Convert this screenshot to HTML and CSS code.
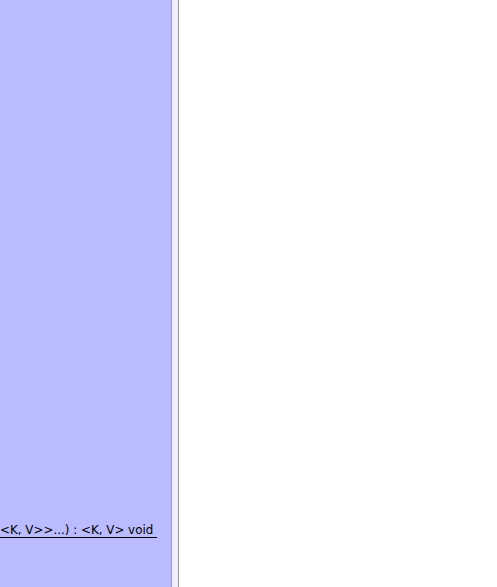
FILE: index.html
```html
<!DOCTYPE html>
<html>
<head><link rel="stylesheet" href="styles.css"></head>
<body>
<div class="split">
  <div class="left">
    <div class="spacer"></div>
    <div class="sig">&lt;K, V&gt;&gt;...) : &lt;K, V&gt; void&nbsp;</div>
  </div>
  <div class="divider"></div>
  <div class="right"></div>
</div>
</body>
</html>
```
FILE: styles.css
```css
html, body { margin: 0; padding: 0; height: 100%; }
body { font-family: "DejaVu Sans", sans-serif; background: #fff; }
.split { display: flex; height: 587px; }
.left { width: 171px; background: #bbbbff; display: flex; flex-direction: column; overflow: hidden; }
.spacer { height: 522px; }
.sig { font-size: 11.9px; line-height: 16px; color: #000; text-decoration: underline; text-underline-offset: 3px; white-space: nowrap; }
.divider { width: 6px; background: #eeeeff; border-left: 1px solid #9999cc; border-right: 1px solid #999999; }
.right { flex: 1; background: #fff; }
```
